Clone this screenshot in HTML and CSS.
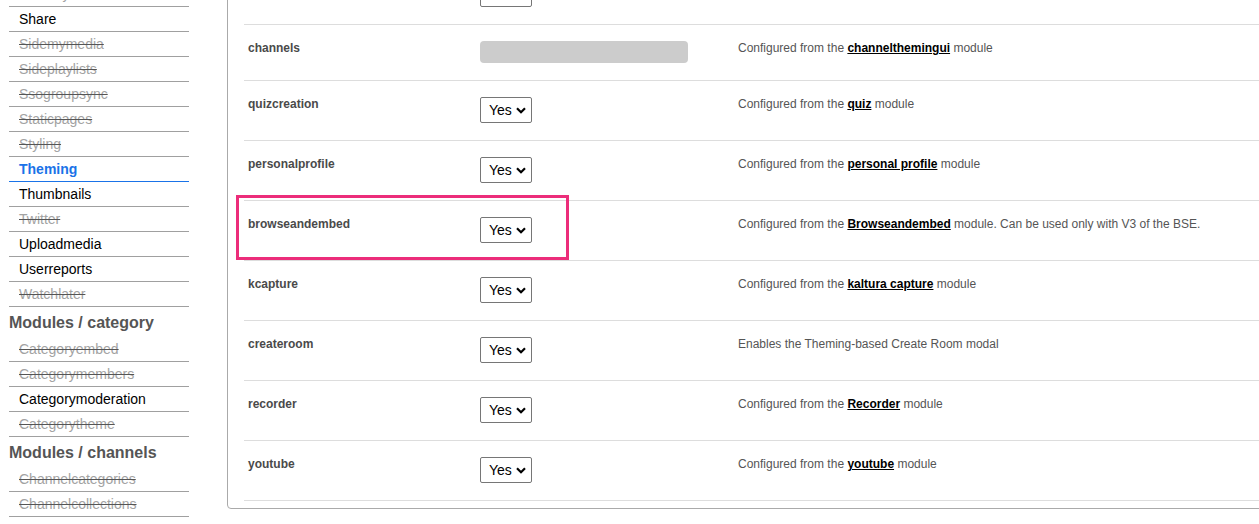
FILE: index.html
```html
<!DOCTYPE html>
<html>
<head>
<meta charset="utf-8">
<link rel="stylesheet" href="styles.css">
</head>
<body>
<div class="page">
  <nav class="sidebar">
    <ul class="menu">
      <li class="item off">Security</li>
      <li class="item">Share</li>
      <li class="item off">Sidemymedia</li>
      <li class="item off">Sideplaylists</li>
      <li class="item off">Ssogroupsync</li>
      <li class="item off">Staticpages</li>
      <li class="item off">Styling</li>
      <li class="item active">Theming</li>
      <li class="item">Thumbnails</li>
      <li class="item off">Twitter</li>
      <li class="item">Uploadmedia</li>
      <li class="item">Userreports</li>
      <li class="item off">Watchlater</li>
    </ul>
    <h3 class="group">Modules / category</h3>
    <ul class="menu">
      <li class="item off">Categoryembed</li>
      <li class="item off">Categorymembers</li>
      <li class="item">Categorymoderation</li>
      <li class="item off">Categorytheme</li>
    </ul>
    <h3 class="group">Modules / channels</h3>
    <ul class="menu">
      <li class="item off">Channelcategories</li>
      <li class="item off">Channelcollections</li>
    </ul>
  </nav>

  <main class="card">
    <div class="row">
      <div class="label"></div>
      <div class="ctrl"><span class="sel"><select><option>Yes</option></select><svg class="chev" viewBox="0 0 10 7" width="10" height="7"><path d="M1 1.2 L5 5.2 L9 1.2" fill="none" stroke="#000" stroke-width="2.2"/></svg></span></div>
      <div class="desc"></div>
    </div>
    <div class="row">
      <div class="label">channels</div>
      <div class="ctrl"><div class="disabled-bar"></div></div>
      <div class="desc">Configured from the <a href="#">channelthemingui</a> module</div>
    </div>
    <div class="row">
      <div class="label">quizcreation</div>
      <div class="ctrl"><span class="sel"><select><option>Yes</option></select><svg class="chev" viewBox="0 0 10 7" width="10" height="7"><path d="M1 1.2 L5 5.2 L9 1.2" fill="none" stroke="#000" stroke-width="2.2"/></svg></span></div>
      <div class="desc">Configured from the <a href="#">quiz</a> module</div>
    </div>
    <div class="row">
      <div class="label">personalprofile</div>
      <div class="ctrl"><span class="sel"><select><option>Yes</option></select><svg class="chev" viewBox="0 0 10 7" width="10" height="7"><path d="M1 1.2 L5 5.2 L9 1.2" fill="none" stroke="#000" stroke-width="2.2"/></svg></span></div>
      <div class="desc">Configured from the <a href="#">personal profile</a> module</div>
    </div>
    <div class="row highlighted">
      <div class="label">browseandembed</div>
      <div class="ctrl"><span class="sel"><select><option>Yes</option></select><svg class="chev" viewBox="0 0 10 7" width="10" height="7"><path d="M1 1.2 L5 5.2 L9 1.2" fill="none" stroke="#000" stroke-width="2.2"/></svg></span></div>
      <div class="desc">Configured from the <a href="#">Browseandembed</a> module. Can be used only with V3 of the BSE.</div>
      <div class="hl-box"></div>
    </div>
    <div class="row">
      <div class="label">kcapture</div>
      <div class="ctrl"><span class="sel"><select><option>Yes</option></select><svg class="chev" viewBox="0 0 10 7" width="10" height="7"><path d="M1 1.2 L5 5.2 L9 1.2" fill="none" stroke="#000" stroke-width="2.2"/></svg></span></div>
      <div class="desc">Configured from the <a href="#">kaltura capture</a> module</div>
    </div>
    <div class="row">
      <div class="label">createroom</div>
      <div class="ctrl"><span class="sel"><select><option>Yes</option></select><svg class="chev" viewBox="0 0 10 7" width="10" height="7"><path d="M1 1.2 L5 5.2 L9 1.2" fill="none" stroke="#000" stroke-width="2.2"/></svg></span></div>
      <div class="desc">Enables the Theming-based Create Room modal</div>
    </div>
    <div class="row">
      <div class="label">recorder</div>
      <div class="ctrl"><span class="sel"><select><option>Yes</option></select><svg class="chev" viewBox="0 0 10 7" width="10" height="7"><path d="M1 1.2 L5 5.2 L9 1.2" fill="none" stroke="#000" stroke-width="2.2"/></svg></span></div>
      <div class="desc">Configured from the <a href="#">Recorder</a> module</div>
    </div>
    <div class="row">
      <div class="label">youtube</div>
      <div class="ctrl"><span class="sel"><select><option>Yes</option></select><svg class="chev" viewBox="0 0 10 7" width="10" height="7"><path d="M1 1.2 L5 5.2 L9 1.2" fill="none" stroke="#000" stroke-width="2.2"/></svg></span></div>
      <div class="desc">Configured from the <a href="#">youtube</a> module</div>
    </div>
  </main>
</div>
</body>
</html>
```
FILE: styles.css
```css
html, body {
  margin: 0;
  padding: 0;
  background: #fff;
  overflow: hidden;
  font-family: "Liberation Sans", Arial, sans-serif;
}

.page {
  display: flex;
  align-items: flex-start;
  width: 1400px;
}

.sidebar {
  flex: none;
  width: 180px;
  margin: -18px 0 0 9px;
}

.menu {
  list-style: none;
  margin: 0;
  padding: 0;
}

.item {
  height: 24px;
  line-height: 24px;
  padding-left: 10px;
  font-size: 14px;
  color: #000;
  border-bottom: 1px solid #a0a0a0;
  white-space: nowrap;
}

.item.off {
  color: #a3a3a3;
  text-decoration: line-through;
  text-decoration-color: #555;
}

.item.active {
  color: #1a73e8;
  font-weight: bold;
  border-bottom-color: #1a73e8;
}

.group {
  margin: 0;
  padding: 7px 0 5px;
  line-height: 18px;
  font-size: 16px;
  font-weight: bold;
  color: #555;
  white-space: nowrap;
}

.card {
  flex: none;
  width: 1150px;
  margin: -36px 0 0 38px;
  padding: 0 16px 7px;
  border: 1px solid #aaa;
  border-radius: 4px;
}

.row {
  position: relative;
  display: grid;
  grid-template-columns: 232px 258px 1fr;
  border-bottom: 1px solid #ddd;
}

.label,
.ctrl,
.desc {
  padding: 16px 4px 17px;
}

.label {
  font-size: 12px;
  line-height: 14px;
  font-weight: bold;
  color: #4a4a4a;
}

.desc {
  font-size: 12px;
  line-height: 14px;
  color: #555;
}

.desc a {
  color: #000;
  font-weight: bold;
  text-decoration: underline;
}

.ctrl {
  line-height: 0;
}

.disabled-bar {
  width: 208px;
  height: 22px;
  background: #ccc;
  border-radius: 4px;
}

.sel {
  position: relative;
  display: inline-block;
}

.sel select {
  appearance: none;
  -webkit-appearance: none;
  width: 52px;
  height: 26px;
  margin: 0;
  padding: 0 0 0 8px;
  border: 1px solid #767676;
  border-radius: 2px;
  background: #fff;
  color: #000;
  font-family: "Liberation Sans", Arial, sans-serif;
  font-size: 14px;
  line-height: 24px;
}

.chev {
  position: absolute;
  left: 36px;
  top: 10px;
  pointer-events: none;
}

.hl-box {
  position: absolute;
  left: -8px;
  top: -6px;
  width: 333px;
  height: 65px;
  box-sizing: border-box;
  border: 3px solid #ec2d7a;
  pointer-events: none;
}
```
